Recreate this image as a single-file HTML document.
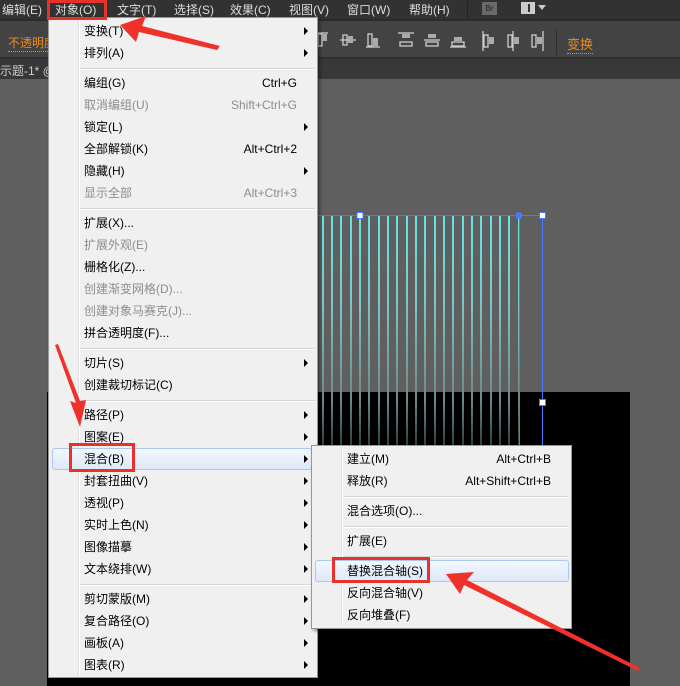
<!DOCTYPE html>
<html><head><meta charset="utf-8"><style>
*{margin:0;padding:0;box-sizing:border-box}
body{width:680px;height:686px;overflow:hidden;background:#5f5f5f;font-family:"Liberation Sans","Noto Sans CJK SC",sans-serif;font-size:12px;position:relative}
.abs{position:absolute}
.mb{left:0;top:0;width:680px;height:19px;background:#323232;color:#ddd}
.mb span{position:absolute;top:1px;font-size:12px}
.tb{left:0;top:19px;width:680px;height:40px;background:#434343;border-top:2px solid #2a2a2a;border-bottom:2px solid #2e2e2e}
.tab{left:0;top:59px;width:680px;height:20px;background:#383838;color:#ccc}
.menu{left:48px;top:17px;width:270px;height:661px;background:#f0f0f0;border:1px solid #979797;box-shadow:2px 2px 3px rgba(0,0,0,.4)}
.it{position:absolute;left:35px;height:22px;line-height:22px;color:#000;font-size:12px;white-space:nowrap}
.dis{color:#8d8d8d}
.sc{position:absolute;right:20px;height:22px;line-height:22px;font-size:12px}
.ar{position:absolute;right:9px;width:0;height:0;border-top:4px solid transparent;border-bottom:4px solid transparent;border-left:4px solid #000}
.sep{position:absolute;left:31px;right:2px;height:2px;border-top:1px solid #d7d7d7;border-bottom:1px solid #fff}
.gut{position:absolute;left:29px;top:2px;bottom:2px;width:2px;border-left:1px solid #e2e2e2;border-right:1px solid #fff}
.hl{position:absolute;border:1px solid #a8c8ee;border-radius:3px;background:linear-gradient(#f2f7fd,#dde9f8)}
.red{position:absolute;border:3px solid #e8312b}
</style></head><body>
<div class="abs mb">
<span style="left:2px">编辑(E)</span><span style="left:55px">对象(O)</span><span style="left:117px">文字(T)</span><span style="left:174px">选择(S)</span><span style="left:230px">效果(C)</span><span style="left:289px">视图(V)</span><span style="left:347px">窗口(W)</span><span style="left:409px">帮助(H)</span>
<div class="abs" style="left:467px;top:1px;width:1px;height:17px;background:#222"></div>
<div class="abs" style="left:482px;top:2px;width:15px;height:13px;background:#6a6a6a;color:#222;font-size:8px;line-height:13px;text-align:center">Br</div>
<div class="abs" style="left:521px;top:2px;width:14px;height:12px;border:2px solid #ccc;background:linear-gradient(90deg,#ccc 0 5px,#333 5px 7px,#ccc 7px)"></div>
<div class="abs" style="left:538px;top:5px;border-left:4px solid transparent;border-right:4px solid transparent;border-top:5px solid #ccc"></div>
</div>
<div class="abs tb">
<span class="abs" style="left:8px;top:13px;color:#f08b1a;border-bottom:1px dotted #f08b1a">不透明度</span>
<div class="abs" style="left:567px;top:13px;color:#f08b1a;border-bottom:1px dotted #f08b1a;font-size:13px">变换</div>
<div class="abs" style="left:556px;top:8px;width:1px;height:26px;background:#2e2e2e"></div>
<svg class="abs" style="left:316px;top:8px" width="235" height="26" fill="none" stroke="#ccc" stroke-width="1.3">
<g><rect x="2" y="5" width="4" height="12"/><rect x="6" y="5" width="5" height="7" fill="#aaa" stroke="none"/><line x1="0" y1="4" x2="12" y2="4"/></g>
<g transform="translate(24,0)"><line x1="0" y1="11" x2="16" y2="11"/><rect x="3" y="6" width="4" height="10"/><rect x="8" y="7" width="5" height="7" fill="#aaa" stroke="none"/></g>
<g transform="translate(50,0)"><rect x="2" y="5" width="4" height="12"/><rect x="7" y="9" width="5" height="8" fill="#aaa" stroke="none"/><line x1="0" y1="18" x2="14" y2="18"/></g>
<g transform="translate(82,0)"><line x1="0" y1="4" x2="16" y2="4"/><rect x="4" y="5" width="8" height="4" fill="#aaa" stroke="none"/><rect x="2" y="13" width="12" height="4"/></g>
<g transform="translate(108,0)"><line x1="0" y1="11" x2="16" y2="11"/><rect x="4" y="5" width="8" height="4" fill="#aaa" stroke="none"/><rect x="2" y="13" width="12" height="4"/></g>
<g transform="translate(134,0)"><line x1="0" y1="18" x2="16" y2="18"/><rect x="4" y="8" width="8" height="4" fill="#aaa" stroke="none"/><rect x="2" y="13" width="12" height="4"/></g>
<g transform="translate(166,0)"><line x1="1" y1="2" x2="1" y2="22"/><rect x="2" y="6" width="4" height="12"/><rect x="7" y="8" width="5" height="7" fill="#aaa" stroke="none"/></g>
<g transform="translate(190,0)"><line x1="7" y1="2" x2="7" y2="22"/><rect x="2" y="6" width="4" height="12"/><rect x="8" y="8" width="5" height="7" fill="#aaa" stroke="none"/></g>
<g transform="translate(214,0)"><line x1="13" y1="2" x2="13" y2="22"/><rect x="2" y="6" width="4" height="12"/><rect x="7" y="8" width="5" height="7" fill="#aaa" stroke="none"/></g>
</svg>
</div>
<div class="abs tab"><span class="abs" style="left:0;top:3px">示题-1* @</span></div>
<div class="abs" style="left:47px;top:392px;width:584px;height:294px;background:#000"></div>
<div class="abs" style="left:630px;top:392px;width:50px;height:294px;background:#5f5f5f"></div>
<svg class="abs" style="left:300px;top:200px" width="260" height="260">
<defs><linearGradient id="g" x1="0" y1="0" x2="0" y2="1"><stop offset="0" stop-color="#5ee6e6"/><stop offset=".35" stop-color="#7bc9c9"/><stop offset=".75" stop-color="#6d8a8a"/><stop offset="1" stop-color="#1a2a2a"/></linearGradient></defs>
<g fill="url(#g)">
<rect x="22" y="16" width="2" height="244"/><rect x="31" y="16" width="2" height="244"/><rect x="40" y="16" width="2" height="244"/><rect x="50" y="16" width="2" height="244"/><rect x="59" y="16" width="2" height="244"/><rect x="68" y="16" width="2" height="244"/><rect x="78" y="16" width="2" height="244"/><rect x="87" y="16" width="2" height="244"/><rect x="96" y="16" width="2" height="244"/><rect x="106" y="16" width="2" height="244"/><rect x="115" y="16" width="2" height="244"/><rect x="124" y="16" width="2" height="244"/><rect x="134" y="16" width="2" height="244"/><rect x="143" y="16" width="2" height="244"/><rect x="152" y="16" width="2" height="244"/><rect x="162" y="16" width="2" height="244"/><rect x="171" y="16" width="2" height="244"/><rect x="180" y="16" width="2" height="244"/><rect x="190" y="16" width="2" height="244"/><rect x="199" y="16" width="2" height="244"/><rect x="208" y="16" width="2" height="244"/><rect x="218" y="16" width="2" height="244"/>
</g>
<g stroke="#4a78ff" stroke-width="1" fill="#fff"><line x1="17" y1="15.5" x2="242" y2="15.5"/><line x1="242.5" y1="16" x2="242.5" y2="260"/><line x1="219.5" y1="16" x2="219.5" y2="260"/>
<rect x="57" y="12.5" width="6" height="6"/><rect x="239.5" y="12.5" width="6" height="6"/><rect x="239.5" y="199.5" width="6" height="6"/><rect x="216.5" y="13" width="5" height="5" fill="#4a78ff"/></g>
</svg>
<div class="abs menu">
<div class="gut"></div>
<div class="it" style="top:2px">变换(T)</div><div class="ar" style="top:9px"></div>
<div class="it" style="top:24px">排列(A)</div><div class="ar" style="top:31px"></div>
<div class="sep" style="top:50px"></div>
<div class="it" style="top:54px">编组(G)</div><div class="sc" style="top:54px">Ctrl+G</div>
<div class="it dis" style="top:76px">取消编组(U)</div><div class="sc dis" style="top:76px">Shift+Ctrl+G</div>
<div class="it" style="top:98px">锁定(L)</div><div class="ar" style="top:105px"></div>
<div class="it" style="top:120px">全部解锁(K)</div><div class="sc" style="top:120px">Alt+Ctrl+2</div>
<div class="it" style="top:142px">隐藏(H)</div><div class="ar" style="top:149px"></div>
<div class="it dis" style="top:164px">显示全部</div><div class="sc dis" style="top:164px">Alt+Ctrl+3</div>
<div class="sep" style="top:190px"></div>
<div class="it" style="top:194px">扩展(X)...</div>
<div class="it dis" style="top:216px">扩展外观(E)</div>
<div class="it" style="top:238px">栅格化(Z)...</div>
<div class="it dis" style="top:260px">创建渐变网格(D)...</div>
<div class="it dis" style="top:282px">创建对象马赛克(J)...</div>
<div class="it" style="top:304px">拼合透明度(F)...</div>
<div class="sep" style="top:330px"></div>
<div class="it" style="top:334px">切片(S)</div><div class="ar" style="top:341px"></div>
<div class="it" style="top:356px">创建裁切标记(C)</div>
<div class="sep" style="top:382px"></div>
<div class="it" style="top:386px">路径(P)</div><div class="ar" style="top:393px"></div>
<div class="it" style="top:408px">图案(E)</div><div class="ar" style="top:415px"></div>
<div class="hl" style="left:3px;top:430px;width:260px;height:22px"></div>
<div class="it" style="top:430px">混合(B)</div><div class="ar" style="top:437px"></div>
<div class="it" style="top:452px">封套扭曲(V)</div><div class="ar" style="top:459px"></div>
<div class="it" style="top:474px">透视(P)</div><div class="ar" style="top:481px"></div>
<div class="it" style="top:496px">实时上色(N)</div><div class="ar" style="top:503px"></div>
<div class="it" style="top:518px">图像描摹</div><div class="ar" style="top:525px"></div>
<div class="it" style="top:540px">文本绕排(W)</div><div class="ar" style="top:547px"></div>
<div class="sep" style="top:566px"></div>
<div class="it" style="top:570px">剪切蒙版(M)</div><div class="ar" style="top:577px"></div>
<div class="it" style="top:592px">复合路径(O)</div><div class="ar" style="top:599px"></div>
<div class="it" style="top:614px">画板(A)</div><div class="ar" style="top:621px"></div>
<div class="it" style="top:636px">图表(R)</div><div class="ar" style="top:643px"></div>
</div>
<div class="abs menu" style="left:311px;top:445px;width:261px;height:184px">
<div class="gut"></div>
<div class="it" style="top:2px">建立(M)</div><div class="sc" style="top:2px">Alt+Ctrl+B</div>
<div class="it" style="top:24px">释放(R)</div><div class="sc" style="top:24px">Alt+Shift+Ctrl+B</div>
<div class="sep" style="top:50px"></div>
<div class="it" style="top:54px">混合选项(O)...</div>
<div class="sep" style="top:80px"></div>
<div class="it" style="top:84px">扩展(E)</div>
<div class="sep" style="top:110px"></div>
<div class="hl" style="left:3px;top:114px;width:254px;height:22px"></div>
<div class="it" style="top:114px">替换混合轴(S)</div>
<div class="it" style="top:136px">反向混合轴(V)</div>
<div class="it" style="top:158px">反向堆叠(F)</div>
</div>
<div class="red" style="left:47px;top:0;width:60px;height:20px"></div>
<div class="red" style="left:69px;top:443px;width:66px;height:29px"></div>
<div class="red" style="left:332px;top:557px;width:98px;height:26px"></div>
<svg class="abs" style="left:0;top:0" width="680" height="686">
<g fill="#f0312a">
<polygon points="120,25 146,16 142,26 220,46 217,50 139,32 136,42"/>
<polygon points="80,427 70,401 76,403 55,345 58,344 80,401 86,400"/>
<polygon points="446,574 474,572 467,580 640,668 638,671 464,585 460,594"/>
</g>
</svg>
</body></html>
